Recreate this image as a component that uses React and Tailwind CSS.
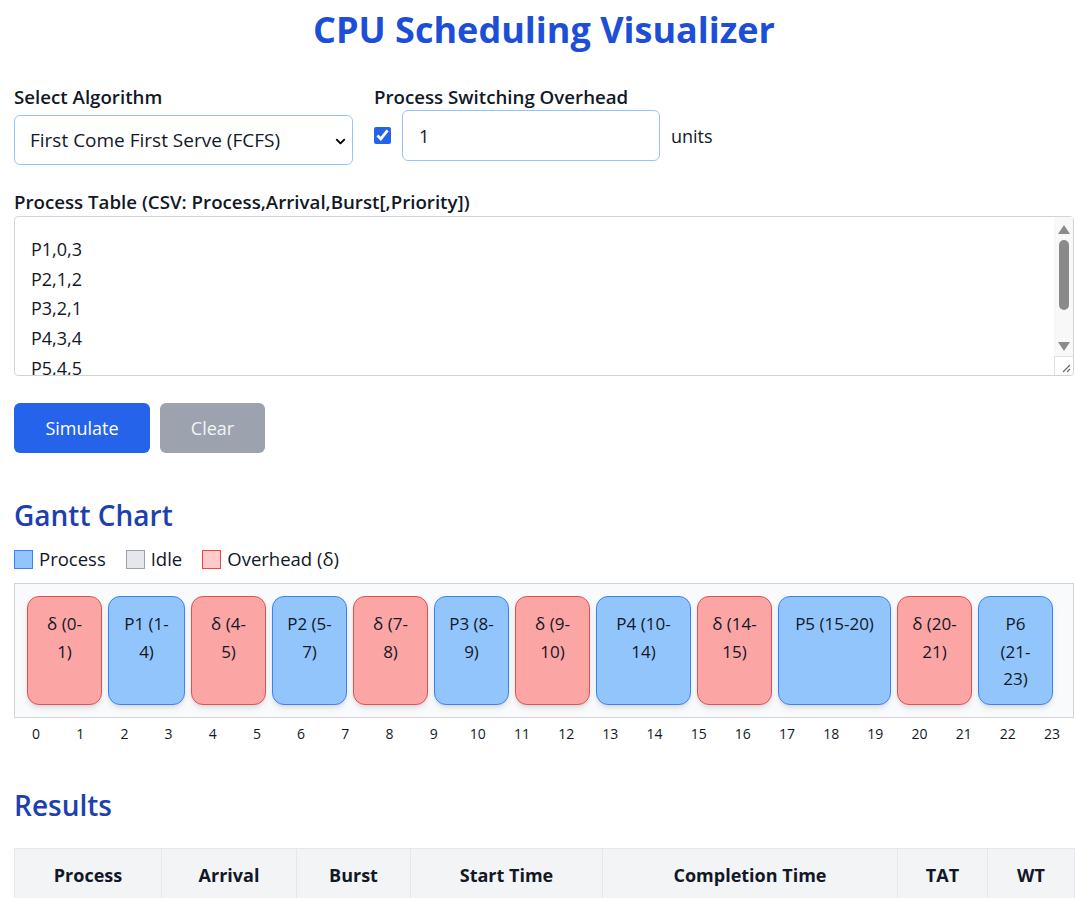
import React, { useState } from "react";
import { ChevronDown } from "lucide-react";

const segments = [
  { label: "δ (0-1)", start: 0, end: 1, type: "overhead" },
  { label: "P1 (1-4)", start: 1, end: 4, type: "process" },
  { label: "δ (4-5)", start: 4, end: 5, type: "overhead" },
  { label: "P2 (5-7)", start: 5, end: 7, type: "process" },
  { label: "δ (7-8)", start: 7, end: 8, type: "overhead" },
  { label: "P3 (8-9)", start: 8, end: 9, type: "process" },
  { label: "δ (9-10)", start: 9, end: 10, type: "overhead" },
  { label: "P4 (10-14)", start: 10, end: 14, type: "process" },
  { label: "δ (14-15)", start: 14, end: 15, type: "overhead" },
  { label: "P5 (15-20)", start: 15, end: 20, type: "process" },
  { label: "δ (20-21)", start: 20, end: 21, type: "overhead" },
  { label: "P6 (21-23)", start: 21, end: 23, type: "process" },
];

const results = [
  { p: "P1", arrival: 0, burst: 3, start: 1, completion: 4, tat: 4, wt: 1 },
  { p: "P2", arrival: 1, burst: 2, start: 5, completion: 7, tat: 6, wt: 4 },
  { p: "P3", arrival: 2, burst: 1, start: 8, completion: 9, tat: 7, wt: 6 },
  { p: "P4", arrival: 3, burst: 4, start: 10, completion: 14, tat: 11, wt: 7 },
  { p: "P5", arrival: 4, burst: 5, start: 15, completion: 20, tat: 16, wt: 11 },
  { p: "P6", arrival: 5, burst: 2, start: 21, completion: 23, tat: 18, wt: 16 },
];

const App = () => {
  const [csv, setCsv] = useState("P1,0,3\nP2,1,2\nP3,2,1\nP4,3,4\nP5,4,5\nP6,5,2");
  const [overhead, setOverhead] = useState("1");
  const [useOverhead, setUseOverhead] = useState(true);

  const ticks = Array.from({ length: 24 }, (_, i) => i);

  return (
    <div className="min-h-screen bg-white pl-[14px] pr-px pt-[10px] pb-10 font-['Open_Sans',sans-serif] text-[#111827]">
      <h1 className="text-center text-4xl leading-10 font-bold text-[#1d4ed8]">
        CPU Scheduling Visualizer
      </h1>

      {/* controls */}
      <div className="mt-[33px] flex gap-[21px]">
        <div className="w-[339px]">
          <label className="block text-[18.7px] leading-7 font-semibold">Select Algorithm</label>
          <div className="relative mt-1">
            <select className="h-[50px] w-full appearance-none rounded-md border border-[#93c5fd] bg-white pl-[15px] text-[19px] text-[#111827] outline-none">
              <option>First Come First Serve (FCFS)</option>
              <option>Shortest Job First (SJF)</option>
              <option>Round Robin (RR)</option>
              <option>Priority</option>
            </select>
            <ChevronDown
              size={15}
              strokeWidth={3}
              className="pointer-events-none absolute right-[5px] top-[19px] text-black"
            />
          </div>
        </div>
        <div>
          <label className="block text-[18.7px] leading-7 font-semibold">Process Switching Overhead</label>
          <div className="-mt-px flex items-center">
            <input
              type="checkbox"
              checked={useOverhead}
              onChange={(e) => setUseOverhead(e.target.checked)}
              className="h-[17px] w-[17px] accent-[#2563eb]"
            />
            <input
              type="text"
              value={overhead}
              onChange={(e) => setOverhead(e.target.value)}
              className="ml-[11px] h-[51px] w-[258px] rounded-md border border-[#93c5fd] px-4 text-lg outline-none"
            />
            <span className="ml-[11px] text-lg">units</span>
          </div>
        </div>
      </div>

      {/* process table */}
      <label className="mt-[23px] block text-[18.7px] leading-7 font-semibold">
        Process Table (CSV: Process,Arrival,Burst[,Priority])
      </label>
      <div className="relative">
        <textarea
          value={csv}
          onChange={(e) => setCsv(e.target.value)}
          className="block h-[160px] w-full resize-none overflow-y-scroll rounded border border-[#d1d5db] px-4 pt-[18px] text-lg leading-[29.7px] outline-none"
        />
        {/* scrollbar */}
        <div className="pointer-events-none absolute top-px right-px flex h-[139px] w-[19px] flex-col items-center bg-[#f8f8f8]">
          <span className="mt-[8px] h-0 w-0 border-x-[6px] border-b-[9px] border-x-transparent border-b-[#8a8a8a]" />
          <span className="mt-[6px] h-[70px] w-[10px] rounded-full bg-[#8a8a8a]" />
          <span className="mt-[32px] h-0 w-0 border-x-[6px] border-t-[9px] border-x-transparent border-t-[#8a8a8a]" />
        </div>
        <div className="pointer-events-none absolute right-px bottom-px flex h-[19px] w-[19px] items-end justify-end rounded-br border-t border-l border-[#e0e0e0] bg-white p-[2px]">
          <svg width="10" height="10" viewBox="0 0 10 10">
            <path d="M9 2L2 9M9 6L6 9" stroke="#6b6b6b" strokeWidth="1.2" />
          </svg>
        </div>
      </div>

      <div className="mt-[27px] flex gap-2.5">
        <button className="h-[50px] w-[136px] rounded-md bg-[#2563eb] text-lg text-white">Simulate</button>
        <button className="h-[50px] w-[105px] rounded-md bg-[#9ca3af] text-lg text-[#f3f4f6]">Clear</button>
      </div>

      {/* gantt */}
      <h2 className="mt-[44px] text-[28px] leading-9 font-semibold text-[#1e40af]">Gantt Chart</h2>
      <div className="mt-3 flex items-center text-[18.5px] leading-7">
        <span className="h-[19px] w-[19px] border border-[#3b82f6] bg-[#93c5fd]" />
        <span className="ml-1.5">Process</span>
        <span className="ml-5 h-[19px] w-[19px] border border-[#9ca3af] bg-[#e5e7eb]" />
        <span className="ml-1.5">Idle</span>
        <span className="ml-5 h-[19px] w-[19px] border border-[#ef4444] bg-[#fecaca]" />
        <span className="ml-1.5">Overhead (δ)</span>
      </div>

      <div className="mt-2.5 flex gap-1.5 border border-[#d1d5db] bg-[#f9fafb] p-3">
        {segments.map((s) => {
          const d = s.end - s.start;
          return (
            <div
              key={s.label}
              style={{ width: Math.max(75, d * 18 + 23) }}
              className={`shrink-0 rounded-xl border px-[13px] pt-[13px] pb-[11px] text-center text-[17px] leading-[27.5px] shadow-md ${
                s.type === "process"
                  ? "border-[#3b82f6] bg-[#93c5fd]"
                  : s.type === "overhead"
                  ? "border-[#e05252] bg-[#fca5a5]"
                  : "border-[#9ca3af] bg-[#e5e7eb]"
              }`}
            >
              {s.label}
            </div>
          );
        })}
      </div>
      <div className="mt-1.5 flex text-sm leading-5">
        {ticks.map((t) => (
          <span key={t} className="flex-1 text-center">
            {t}
          </span>
        ))}
      </div>

      {/* results */}
      <h2 className="mt-[43px] text-[28px] leading-9 font-semibold text-[#1e40af]">Results</h2>
      <table className="mt-[25px] w-full table-fixed border-collapse text-lg">
        <colgroup>
          <col className="w-[147px]" />
          <col className="w-[135px]" />
          <col className="w-[114px]" />
          <col className="w-[192px]" />
          <col className="w-[295px]" />
          <col className="w-[90px]" />
          <col className="w-[87px]" />
        </colgroup>
        <thead>
          <tr className="bg-[#f3f4f6]">
            {["Process", "Arrival", "Burst", "Start Time", "Completion Time", "TAT", "WT"].map((h) => (
              <th key={h} className="border border-[#e5e7eb] py-[14px] leading-6 font-bold">
                {h}
              </th>
            ))}
          </tr>
        </thead>
        <tbody>
          {results.map((r) => (
            <tr key={r.p}>
              {[r.p, r.arrival, r.burst, r.start, r.completion, r.tat, r.wt].map((v, i) => (
                <td key={i} className="border border-[#e5e7eb] py-3 text-center">
                  {v}
                </td>
              ))}
            </tr>
          ))}
        </tbody>
      </table>
    </div>
  );
};

export default App;
